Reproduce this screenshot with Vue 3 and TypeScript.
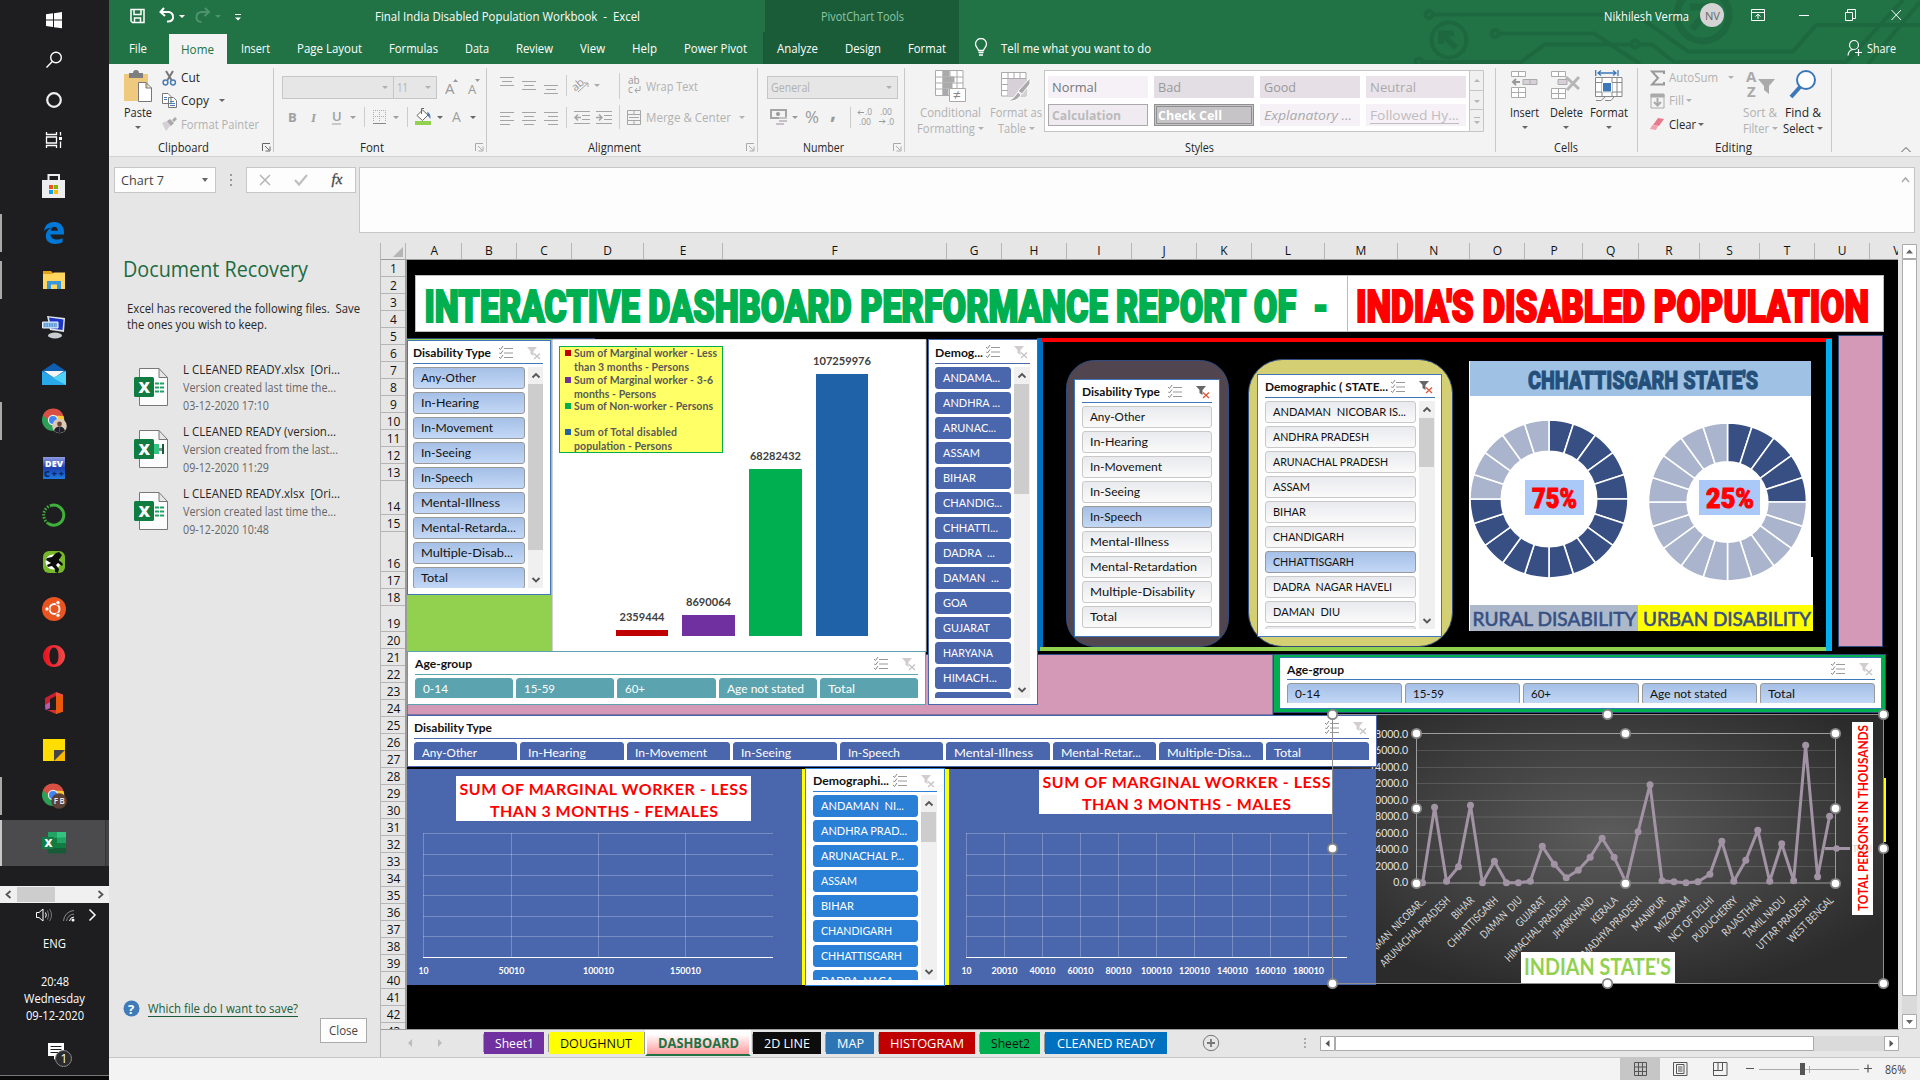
<script setup lang="ts">
import { h } from 'vue'

// A single line of text set to an exact advance width.
const Fit = (p: { t: string; w: number | string; s?: number | string }) => {
  const s = Number(p.s ?? 12)
  return h('svg', { class: 'fit', width: p.w, height: Math.round(s * 1.4) }, [
    h('text', { x: 0, y: Math.round(s * 1.07), 'font-size': s, textLength: p.w, lengthAdjust: 'spacingAndGlyphs' }, p.t),
  ])
}
Fit.props = ['t', 'w', 's']

const appTitle = 'Final India Disabled Population Workbook  -  Excel'
const recoveryNote = 'Excel has recovered the following files.  Save'
const heading = 'INTERACTIVE DASHBOARD PERFORMANCE REPORT OF  -'

const tabs: [string, number, string][] = [
  ['File', 18, 'tabFile'], ['Home', 33, 'on'], ['Insert', 29, ''], ['Page Layout', 65, ''], ['Formulas', 49, ''],
  ['Data', 24, ''], ['Review', 37, ''], ['View', 25, ''], ['Help', 25, ''], ['Power Pivot', 63, 'pp'],
  ['Analyze', 41, 'ctx'], ['Design', 36, 'ctx'], ['Format', 38, 'ctx last'],
]

const styleCells: [string, number, string][] = [
  ['Normal', 45, 'normal'], ['Bad', 23, 'bad'], ['Good', 32, 'good'], ['Neutral', 46, 'neutral'],
  ['Calculation', 69, 'calc'], ['Check Cell', 64, 'check'], ['Explanatory ...', 88, 'expl'], ['Followed Hy...', 89, 'foll'],
]

const files = [
  { n: 'L CLEANED READY.xlsx  [Ori...', nw: 157, v: 'Version created last time the...', vw: 153, d: '03-12-2020 17:10', m: false },
  { n: 'L CLEANED READY (version...', nw: 153, v: 'Version created from the last...', vw: 155, d: '09-12-2020 11:29', m: true },
  { n: 'L CLEANED READY.xlsx  [Ori...', nw: 157, v: 'Version created last time the...', vw: 153, d: '09-12-2020 10:48', m: false },
]

const colEdges = [407, 461.5, 516.5, 571.5, 643.5, 722.5, 946.5, 1001.5, 1066.5, 1131.5, 1196.5, 1251.5, 1324.5, 1397.5, 1470, 1525, 1583, 1638.5, 1699.5, 1759.5, 1814.5, 1869.5]
const cols = colEdges.map((x, i) => ({ n: String.fromCharCode(65 + i), w: (colEdges[i + 1] ?? 1924) - x }))
const tall: Record<number, number> = { 14: 34, 16: 40, 19: 26 }
const rows = Array.from({ length: 43 }, (_, i) => ({ n: i + 1, h: tall[i + 1] ?? (i === 0 ? 16.5 : 17) }))

type Item = [string, number]
interface Slicer {
  x: number; y: number; w: number; h: number; title: string; tw: number; theme: string; pad: number; padR: number
  items: Item[]; sel?: number; row?: boolean; bw?: number; bh: number; active?: boolean; top: number
  thumb?: [number, number]
}
const types: Item[] = [['Any-Other', 55], ['In-Hearing', 58], ['In-Movement', 72], ['In-Seeing', 50], ['In-Speech', 52], ['Mental-Illness', 79]]
const ages: Item[] = [['0-14', 25], ['15-59', 31], ['60+', 20], ['Age not stated', 77], ['Total', 27]]
const slicers: Slicer[] = [
  { x: 407, y: 340, w: 144, h: 255, title: 'Disability Type', tw: 78, theme: 'sky', pad: 5, padR: 7, top: 26, bw: 112, bh: 221, thumb: [17, 166],
    items: [...types, ['Mental-Retarda...', 95], ['Multiple-Disab...', 92], ['Total', 27]] },
  { x: 407, y: 651, w: 519, h: 54, title: 'Age-group', tw: 57, theme: 'teal', pad: 7, padR: 7, top: 26, row: true, bh: 20, items: ages },
  { x: 928, y: 339, w: 110, h: 366, title: 'Demog...', tw: 48, theme: 'indigo', pad: 6, padR: 7, top: 27, bw: 76, bh: 331, thumb: [17, 110],
    items: [['ANDAMA...', 57], ['ANDHRA ...', 57], ['ARUNAC...', 53], ['ASSAM', 37], ['BIHAR', 33], ['CHANDIG...', 59], ['CHHATTI...', 55], ['DADRA  ...', 52], ['DAMAN  ...', 56], ['GOA', 24], ['GUJARAT', 47], ['HARYANA', 50], ['HIMACH...', 54], ['', 10]] },
  { x: 1074, y: 379, w: 146, h: 258, title: 'Disability Type', tw: 78, theme: 'pale', pad: 7, padR: 7, top: 26, bw: 130, bh: 226, active: true, sel: 4,
    items: [...types, ['Mental-Retardation', 107], ['Multiple-Disability', 105], ['Total', 27]] },
  { x: 1257, y: 374, w: 185, h: 263, title: 'Demographic ( STATE...', tw: 123, theme: 'pale', pad: 7, padR: 6, top: 26, bw: 151, bh: 228, active: true, sel: 6, thumb: [17, 49],
    items: [['ANDAMAN  NICOBAR IS...', 133], ['ANDHRA PRADESH', 96], ['ARUNACHAL PRADESH', 115], ['ASSAM', 37], ['BIHAR', 33], ['CHANDIGARH', 71], ['CHHATTISGARH', 81], ['DADRA  NAGAR HAVELI', 119], ['DAMAN  DIU', 67], ['', 10]] },
  { x: 1279, y: 657, w: 603, h: 52, title: 'Age-group', tw: 57, theme: 'sky', pad: 7, padR: 6, top: 25, row: true, bh: 20, items: ages },
  { x: 407, y: 715, w: 970, h: 52, title: 'Disability Type', tw: 78, theme: 'indigo', pad: 6, padR: 7, top: 26, row: true, bh: 18,
    items: [...types, ['Mental-Retar...', 80], ['Multiple-Disa...', 84], ['Total', 27]] },
  { x: 805, y: 768, w: 140, h: 218, title: 'Demographi...', tw: 76, theme: 'azure', pad: 7, padR: 7, top: 26, bw: 105, bh: 185, thumb: [17, 30],
    items: [['ANDAMAN  NI...', 83], ['ANDHRA PRAD...', 86], ['ARUNACHAL P...', 83], ['ASSAM', 36], ['BIHAR', 33], ['CHANDIGARH', 71], ['CHHATTISGARH', 81], ['DADRA  NAGA...', 80]] },
]

const legend: [string, number, number, string][] = [
  ['Sum of Marginal worker - Less', 143, 356.5, '#c00000'], ['than 3 months - Persons', 115, 370.5, ''],
  ['Sum of Marginal worker - 3-6', 139, 383.5, '#7030a0'], ['months - Persons', 82, 397.5, ''],
  ['Sum of Non-worker - Persons', 139, 409.5, '#00b050'],
  ['Sum of Total disabled', 103, 435.5, '#1f62a8'], ['population - Persons', 98, 449.5, ''],
]
const bars = [
  { x: 616, y: 630, w: 52, c: '#c00000', t: '2359444', tw: 45, ty: 621 },
  { x: 682, y: 615, w: 53, c: '#7030a0', t: '8690064', tw: 45, ty: 606 },
  { x: 749, y: 469, w: 53, c: '#00b050', t: '68282432', tw: 51, ty: 460 },
  { x: 816, y: 374, w: 52, c: '#1f62a8', t: '107259976', tw: 58, ty: 365 },
]

const wedge = (cx: number, cy: number, R: number, r: number, i: number) => {
  const p = (a: number, q: number) => `${(cx + q * Math.sin(a)).toFixed(2)} ${(cy - q * Math.cos(a)).toFixed(2)}`
  const a = (i * Math.PI) / 10, b = ((i + 1) * Math.PI) / 10
  return `M${p(a, R)}A${R} ${R} 0 0 1 ${p(b, R)}L${p(b, r)}A${r} ${r} 0 0 0 ${p(a, r)}Z`
}
const donuts = [
  { cx: 1549, cy: 499, R: 79, r: 47.7, n: 15 },
  { cx: 1727.5, cy: 502, R: 79, r: 40.3, n: 5 },
]

const hLines = [833.5, 854.5, 875.5, 895.5, 916.5, 936.5]
const femaleAxis = [['10', 423.5, 10], ['50010', 511.5, 26], ['100010', 598.5, 31], ['150010', 685.5, 31]] as [string, number, number][]
const maleAxis = Array.from({ length: 10 }, (_, i) => [String(i * 20000 + 10), 966.5 + i * 38, i === 0 ? 10 : i < 5 ? 26 : 31] as [string, number, number])

const raw = [578, 352, 574, 530, 346, 578, 514, 578, 578, 574, 469, 523, 563, 541, 502, 445, 502, 578, 425, 284, 572, 575, 578, 575, 553, 454, 574, 511, 421, 574, 461, 572, 166, 560, 379]
const pts = raw.map((v, i) => ({ x: 1422.6 + i * 11.97, y: 690 + v / 3 }))
const line = pts.map(p => `${p.x.toFixed(1)},${p.y.toFixed(1)}`).join(' ')
const states: [string, number][] = [['ANDAMAN  NICOBAR...', 92], ['ARUNACHAL PRADESH', 94], ['BIHAR', 27], ['CHHATTISGARH', 67], ['DAMAN  DIU', 54], ['GUJARAT', 38], ['HIMACHAL PRADESH', 87], ['JHARKHAND', 54], ['KERALA', 33], ['MADHYA PRADESH', 80], ['MANIPUR', 43], ['MIZORAM', 45], ['NCT OF DELHI', 59], ['PUDUCHERRY', 59], ['RAJASTHAN', 51], ['TAMIL NADU', 54], ['UTTAR PRADESH', 70], ['WEST BENGAL', 60]]
const handles: [number, number][] = [[1332.5, 714.5], [1607.5, 714.5], [1883.5, 714.5], [1332.5, 848.5], [1883.5, 848.5], [1332.5, 983.5], [1607.5, 983.5], [1883.5, 983.5], [1416.5, 733.5], [1625.5, 733.5], [1835.5, 733.5], [1416.5, 808.5], [1835.5, 808.5], [1416.5, 883.5], [1625.5, 883.5], [1835.5, 883.5]]

const sheets: [string, number, number, string][] = [
  ['Sheet1', 60, 39, 'purple'], ['DOUGHNUT', 94, 72, 'yellow'], ['DASHBOARD', 106, 81, 'current'], ['2D LINE', 68, 46, 'dark'],
  ['MAP', 48, 27, 'blue'], ['HISTOGRAM', 96, 74, 'red'], ['Sheet2', 60, 39, 'green'], ['CLEANED READY', 122, 98, 'azureTab'],
]
</script>

<template>
  <div class="screen">
    <aside class="taskbar">
      <div class="tk s"><svg width="18" height="18"><path fill="#fff" d="M1 3.3 8 2.3V8.6H1zM9 2.2 17 1V8.6H9zM1 9.6H8V16L1 15zM9 9.6H17V17.3L9 16.2z" /></svg></div>
      <div class="tk s"><svg width="18" height="18" fill="none" stroke="#fff" stroke-width="1.4"><circle cx="11" cy="6.5" r="5.3" /><path d="M7.3 10.5 1.5 16.5" /></svg></div>
      <div class="tk s"><svg width="18" height="18"><circle cx="9" cy="9" r="6.8" fill="none" stroke="#eee" stroke-width="2.2" /></svg></div>
      <div class="tk s v"><svg width="18" height="18" fill="none" stroke="#fff" stroke-width="1.3"><path d="M1.5 1V3.5H11.5V1M1.5 17V14.5H11.5V17M1.5 6H11.5V12H1.5zM15.5 1V4.5M15.5 10.500V17" /><path d="M14 6h3v3h-3z" fill="#fff" stroke="none" /></svg></div>
      <div class="tk"><svg width="24" height="26"><path d="M6.500 8V2H17V8" fill="none" stroke="#eee" stroke-width="2" /><path fill="#eee" d="M0 7H23V25H0z" /><path fill="#f25022" d="M7 12h4v4H7z" /><path fill="#7fba00" d="M12 12h4v4h-4z" /><path fill="#00a4ef" d="M7 17h4v4H7z" /><path fill="#ffb900" d="M12 17h4v4h-4z" /></svg></div>
      <div class="tk run"><svg width="22" height="24"><path fill="#0078d7" d="M1 10C2 3 6.500 1 11.500 1 17.500 1 21 5.500 21 11V13.500H7.500C7.800 17 10.500 18.500 13.500 18.500 16 18.500 18 17.800 19.500 16.900V21.300C17.500 22.500 15 23 12.200 23 6.500 23 2.800 19.800 2.800 15 2.800 11 5 8.200 8.300 6.800 5.500 7 2.800 8.200 1 10zM7.700 9.700H14.800C14.800 7.200 13.500 5.800 11.500 5.800 9.500 5.800 8.200 7.200 7.700 9.700z" /></svg></div>
      <div class="tk run"><svg width="24" height="20"><path fill="#e3a21a" d="M1 1H9L11 3V6H1z" /><path fill="#ffd75e" d="M1 4H10L12 2.500H23V19H1z" /><path fill="#3a96dd" d="M5 11H19V19H15V14.500H9V19H5z" /></svg></div>
      <div class="tk"><svg width="24" height="24"><path fill="#dfe3e8" d="M5 1 23 3 22 17 8 15z" /><path fill="#1b35c4" d="M7 2.500 21.500 4.500 20.500 15 9 13.500z" /><ellipse cx="13" cy="20.500" rx="7" ry="3" fill="#c9ccd0" /><path fill="#8fc3ee" stroke="#eef" d="M.500 7H16V13H.500z" /><path stroke="#3872b8" stroke-dasharray="1.500 1" d="M2 9H15M2 11H15" /></svg></div>
      <div class="tk"><svg width="24" height="24"><path fill="#0f5fb0" d="M0 9 12 1 24 9V14H0z" /><path fill="#f4f4f4" d="M2 9H22L12 16z" /><path fill="#29a8ea" d="M0 9 12 15.500 24 9V23H0z" /><path fill="#50d1f8" d="M24 9 11 16 24 23z" /></svg></div>
      <div class="tk run"><svg width="26" height="26"><circle cx="12" cy="12" r="11" fill="#2c9f57" /><path fill="#d94f43" d="M2 7A11 11 0 0 1 22.500 8H12L9 14z" /><path fill="#fcc934" d="M22.500 8A11 11 0 0 1 13 23L17 13 12 7.500z" /><circle cx="12" cy="12" r="5.200" fill="#eee" /><circle cx="12" cy="12" r="4" fill="#4285f4" /><circle cx="18.500" cy="18" r="7.300" fill="#d8c9b8" /><path fill="#20202a" d="M13 23Q14 18.500 18.500 18.500T24 23Q18.500 27 13 23z" /><circle cx="18.500" cy="16" r="2.400" fill="#6d4535" /><path fill="#b2202c" d="M18 19h1v5h-1z" /></svg></div>
      <div class="tk"><svg width="22" height="22"><defs><linearGradient id="dv" x2="0" y2="1"><stop offset="0" stop-color="#8d9be0" /><stop offset=".5" stop-color="#1e3fae" /><stop offset="1" stop-color="#1f7be0" /></linearGradient></defs><path fill="url(#dv)" d="M0 0H22V22H0z" /><text x="2" y="10" font-size="9" font-weight="800" fill="#fff" textLength="18">DEV</text><text x="1" y="20" font-size="9" font-weight="800" fill="#0a2a66" textLength="20">C++</text></svg></div>
      <div class="tk"><svg width="24" height="24" fill="none" stroke="#3fb13a"><path stroke-width="3" d="M9 2.500A10 10 0 1 1 6 20.300" /><path stroke-width="3" stroke-dasharray="1.500 1.500" d="M6 20.300A10 10 0 0 1 9 2.500" /></svg></div>
      <div class="tk"><svg width="22" height="22"><rect width="22" height="22" rx="6" fill="#76b82a" /><circle cx="10" cy="11" r="7.500" fill="#fff" /><path fill="#0c0c0c" d="M9 6 13 2 16 1 19 4 16 9 20 13 19 15 15 12 13 14 16 18 15 22 12 21 12 18 9 15 5 16 4 14 8 12 3 9 4 7z" /></svg></div>
      <div class="tk"><svg width="24" height="24"><circle cx="12" cy="12" r="12" fill="#e95420" /><circle cx="12.500" cy="12" r="5" fill="none" stroke="#fff" stroke-width="2" /><g fill="#fff" stroke="#e95420"><circle cx="5" cy="12" r="2.200" /><circle cx="16" cy="5.700" r="2.200" /><circle cx="16" cy="18.300" r="2.200" /></g></svg></div>
      <div class="tk"><svg width="22" height="22"><defs><linearGradient id="op"><stop offset="0" stop-color="#e8101f" /><stop offset="1" stop-color="#f04a4a" /></linearGradient></defs><path fill="url(#op)" fill-rule="evenodd" d="M11 0A11 11 0 1 1 11 22 11 11 0 1 1 11 0M11 2.500C8 2.500 6.500 6.500 6.500 11S8 19.500 11 19.500 15.500 15.500 15.500 11 14 2.500 11 2.500z" /></svg></div>
      <div class="tk"><svg width="20" height="22"><path fill="#c8202f" d="M1 6 12 0V4L6 7V16L1 18z" /><path fill="#b65cb0" d="M1 13 6 10V16L2 18z" /><path fill="#f2503b" d="M12 0 19 2.500V19.500L12 22z" /><path fill="#e8590c" d="M12 4H19V19.500L12 22z" /><path fill="#d42d3a" d="M3 18H12V22z" /></svg></div>
      <div class="tk"><svg width="22" height="22"><path fill="#fd0" d="M0 0H22V22H0z" /><path fill="#fcb900" d="M11 22H22V11z" /><path fill="#454545" d="M11 11H22L11 22z" /></svg></div>
      <div class="tk run"><svg width="26" height="26"><circle cx="12" cy="12" r="11" fill="#2c9f57" /><path fill="#d94f43" d="M2 7A11 11 0 0 1 22.500 8H12L9 14z" /><path fill="#fcc934" d="M22.500 8A11 11 0 0 1 13 23L17 13 12 7.500z" /><circle cx="12" cy="12" r="5.200" fill="#eee" /><circle cx="12" cy="12" r="4" fill="#4285f4" /><circle cx="18" cy="18" r="7.800" fill="#5d4037" /><text x="12.700" y="21" font-size="8" font-weight="600" fill="#eee" textLength="11">FB</text></svg></div>
      <div class="tk run hot"><svg width="24" height="22"><path fill="#21a366" d="M6 0H15V6H6z" /><path fill="#33c481" d="M15 0H24V6H15z" /><path fill="#107c41" d="M6 6H15V16H6zM15 11h9v5h-9z" /><path fill="#21a366" d="M15 5.500H24V11H15z" /><path fill="#185c37" d="M6 16H24V21.500H6z" /><rect y="5" width="12" height="12" rx="1" fill="#107c41" /><text x="2.500" y="15" font-size="11" font-weight="800" fill="#fff">X</text></svg></div>
      <div class="tkscroll"><svg width="109" height="17"><path fill="#cdcdcd" d="M17 1H55V16H17z" /><path d="M10.500 5 6.500 8.500 10.500 12M98.500 5 102.500 8.500 98.500 12" fill="none" stroke="#555" stroke-width="1.800" /></svg></div>
      <div class="tray"><svg width="70" height="16" fill="none" stroke="#fff"><path d="M1.500 5.500H4L8 2V14L4 10.500H1.500z" /><path d="M10.500 5.500Q12 8 10.500 10.500" /><path stroke="#777" d="M12.500 3.500Q15 8 12.500 12.500M14.500 2Q18.500 8 14.500 14" /><path stroke="#888" d="M28.500 14A11 11 0 0 1 39 3.500M31.500 14A8 8 0 0 1 39 7" /><path d="M34.500 14A5 5 0 0 1 39 10" /><circle cx="38" cy="13" r="1.500" fill="#fff" stroke="none" /><path stroke-width="1.500" d="M54.500 2.500 60 8 54.500 13.500" /></svg></div>
      <Fit class="eng" t="ENG" w="23" />
      <Fit class="clk" t="20:48" w="28" />
      <Fit t="Wednesday" w="61" />
      <Fit t="09-12-2020" w="58" />
      <svg class="note" width="28" height="26"><path fill="#fff" d="M2 1H18V14H11L8 18V14H2z" /><path stroke="#1e1e20" d="M4.500 4.500H15.500M4.500 7.500H15.500M4.500 10.500H12" /><circle cx="17.500" cy="16.500" r="8" fill="#2b2b2d" stroke="#888" /><text x="14.500" y="21" font-size="12" fill="#fff">1</text></svg>
      <div class="peek" />
    </aside>

    <main class="excel">
      <header class="top">
        <svg class="circuit" width="510" height="64" viewBox="1410 0 510 64" fill="none" stroke="#1e6840" stroke-width="4"><circle cx="1429" cy="14.500" r="3.500" /><path d="M1433 14.500H1636L1688 51.500H1793L1816 25H1920M1498 33.500H1594L1640 64M1423 62H1521L1545 44.500H1631M1640 44.500H1652L1674 62H1846L1903 0M1868 64 1920 2" /><circle cx="1495" cy="33.500" r="3.500" /><circle cx="1635" cy="44" r="3.500" /><circle cx="1419" cy="62" r="3.500" /><circle cx="1449" cy="40" r="17.500" /><path stroke-width="6" d="M1456 48 1443 35M1441 44V33.500H1454" /><circle cx="1703" cy="15" r="26" stroke-width="7" /><path stroke-width="7" d="M1692 29 1707 12M1690 7H1706V23" /></svg>
        <div class="titlebar">
          <svg class="qat" width="120" height="24" fill="none" stroke="#fff"><path stroke-width="1.500" d="M2 5.500H15V18.500H3.500L2 17zM5 6V10.500H12V6M5.500 18V14H11.500V18" /><path stroke-width="2" d="M35 4 31.500 8 36 12M32 8H40Q44.500 9 44 14 43 18 38 17.500" /><path fill="#fff" stroke="none" d="M50 11h6l-3 3zM106 13.500h6l-3 3z" /><path stroke="#4f936d" stroke-width="2" d="M76 4 80 8 75.500 12M79.500 8H72Q67 9 67.500 14 68 18 72.500 18" /><path fill="#4f936d" stroke="none" d="M86 11h6l-3 3z" /><path d="M106 10.500H112" /></svg>
          <Fit class="wb" :t="appTitle" w="265" />
          <div class="ctxhead"><Fit t="PivotChart Tools" w="83" /></div>
          <Fit class="user" t="Nikhilesh Verma" w="85" />
          <div class="avatar"><Fit t="NV" w="15" s="11" /></div>
          <svg class="win" width="160" height="20" fill="none" stroke="#fff"><path d="M2.500 4.500H15.500V15.500H2.500zM2.500 7.500H15.500M9 14V9.500M6.500 11.500 9 9.200 11.500 11.500M50 10.500H60M96.500 7.500H103.500V15.500H96.500zM98.500 7V4.500H106.500V13.500H104M142.500 5 152 15M152 5 142.500 15" /></svg>
        </div>
        <nav class="tabs">
          <div v-for="t in tabs" :key="t[0]" class="tab" :class="t[2]"><Fit :t="t[0]" :w="t[1]" /></div>
          <svg class="bulb" width="14" height="20" fill="none" stroke="#fff" stroke-width="1.300"><path d="M4.500 12.500C4 10 1.500 9 1.500 6A5.500 5.500 0 0 1 12.500 6C12.500 9 10 10 9.500 12.500zM4.500 14.500H9.500M5 17H9" /></svg>
          <Fit t="Tell me what you want to do" w="150" />
          <svg class="shareic" width="16" height="18" fill="none" stroke="#fff" stroke-width="1.200"><circle cx="7" cy="6" r="4.500" /><path d="M1 16.500Q1.500 11 6 10.500M8 13.500H15M11.500 10V17" /></svg>
          <Fit t="Share" w="29" />
        </nav>
      </header>

      <section class="ribbon">
        <div class="group g1">
          <div class="gc">
            <div class="big paste"><svg width="28" height="32"><path fill="#eec97e" d="M0 4H24V31H0z" /><path fill="#7f7f7f" d="M5 3H9Q9 0 12 0T15 3H19V8H5z" /><path fill="#fff" stroke="#777" d="M14.500 12.500H22L27.500 18V31.500H14.500zM22 12.500V18H27.500" /></svg><Fit t="Paste" w="28" /><i class="dn" /></div>
            <div class="stack">
              <div><svg width="15" height="16" fill="none"><path stroke="#777" stroke-width="2" d="M4 1 9.500 10M11 1 5.500 10" /><g stroke="#4a7db5" stroke-width="1.500"><circle cx="3.500" cy="12.500" r="2.400" /><circle cx="11" cy="12.500" r="2.400" /></g></svg><Fit t="Cut" w="19" /></div>
              <div><svg width="15" height="15"><path fill="#fff" stroke="#777" d="M.500.500H6L9 3.500V10.500H.500zM6.500 4.500H11.500L14.500 7.500V14.500H6.500z" /><path stroke="#4a7db5" d="M2 4.500H5M2 6.500H5M8 8.500H12M8 10.500H13M8 12.500H13" /></svg><Fit t="Copy" w="28" /><i class="dn" /></div>
              <div class="off"><svg width="15" height="15"><path fill="#d5cfd8" d="M0 6 5 4 9 8 4 14z" /><path fill="#aaa" d="M5 4 8 2 12 6 9 9zM10 3 13 0 15 2 12 5z" /></svg><Fit t="Format Painter" w="78" /></div>
            </div>
          </div>
          <div class="gl"><span><Fit t="Clipboard" w="51" /></span><svg class="la" width="9" height="9"><path d="M.500 8V.500H8M3 3 7 7M8 3.500V8H3.500" fill="none" stroke="#666" /></svg></div>
        </div>
        <div class="group g2">
          <div class="gc col off">
            <div class="r1"><div class="combo f1"><i class="dn" /></div><div class="combo f2"><Fit t="11" w="11" /><i class="dn" /></div><svg class="m8" width="36" height="20" fill="#999"><text x="0" y="17" font-size="15">A</text><path d="M8 5h5l-2.500-3z" /><text x="23" y="17" font-size="13">A</text><path d="M30 2h5l-2.500 3z" /></svg></div>
            <div class="r2"><svg width="182" height="22" fill="#a0a0a0"><text x="0" y="15.500" font-size="13" font-weight="700">B</text><text x="23" y="15.500" font-size="13" font-style="italic" font-family="Liberation Serif" font-weight="700">I</text><text x="44" y="15" font-size="13" font-weight="600">U</text><path d="M44 17.500h9v1h-9zM62 10h6l-3 3zM105 10h6l-3 3z" /><path fill="none" stroke="#ccc" d="M76.500 1V21M119.500 1V21" /><path fill="none" stroke="#b5a9b5" stroke-dasharray="1 1" d="M85 4.500H98M85 10.500H98M85.500 4V16M91.500 4V16M97.500 4V16" /><path stroke="#888" d="M85 17.500H98" /><path fill="#fff" stroke="#666" d="M129 9.500 134.500 4 140 9 134.500 14.500zM133.500 8V2.500H136" /><path fill="#4a7db5" d="M139 6Q143 7 142.500 13L140 10z" /><path fill="#92d050" d="M127 15h16v4h-16z" /><path fill="#666" d="M149 10h6l-3 3z" /><text x="164" y="15.500" font-size="14">A</text></svg><i class="dn k" /></div>
          </div>
          <div class="gl"><span><Fit t="Font" w="24" /></span><svg class="la off" width="9" height="9"><path d="M.500 8V.500H8M3 3 7 7M8 3.500V8H3.500" fill="none" stroke="#aaa" /></svg></div>
        </div>
        <div class="group g3">
          <div class="gc col off al">
            <div class="r1"><svg width="146" height="26" fill="none" stroke="#a5a5a5"><path d="M0 4.500H14M2 8.500H12M0 12.500H14M22 8.500H36M24 12.500H34M22 16.500H36M44 12.500H58M46 16.500H56M44 20.500H58" /><path stroke="#ccc" d="M66.500 2V23M119.500 0V26" /><text x="72" y="14" font-size="11" fill="#999" stroke="none" transform="rotate(-40 80 12)">ab</text><path d="M78 19 88 10M84 10H88V14" /><path fill="#aaa" stroke="none" d="M94 11h6l-3 3z" /><text x="128" y="11" font-size="10" fill="#999" stroke="none">ab</text><text x="128" y="20" font-size="10" fill="#999" stroke="none">c</text><path d="M135 17.500H140V13M137 15 135 17.500 137 20" /></svg><Fit t="Wrap Text" w="52" /></div>
            <div class="r2"><svg width="146" height="24" fill="none" stroke="#a5a5a5"><path d="M0 7.500H14M0 11.500H10M0 15.500H14M0 19.500H10M22 7.500H36M24 11.500H34M22 15.500H36M24 19.500H34M44 7.500H58M48 11.500H58M44 15.500H58M48 19.500H58M74 6.500H90M82 10.500H90M82 14.500H90M74 18.500H90M96 6.500H112M104 10.500H112M104 14.500H112M96 18.500H112" /><path stroke-width="1.500" d="M81 12.500H75M78 9.500 75 12.500 78 15.500M96 12.500H102M99 9.500 102 12.500 99 15.500" /><path stroke="#ccc" d="M66.500 2V23M119.500 0V24" /><path d="M127.500 5.500H140.500V19.500H127.500zM127.500 9.500H140.500M127.500 15.500H140.500M134 5.500V9M134 16V19M129 12.500H139" /></svg><Fit t="Merge &amp; Center" w="85" /><i class="dn m8" /></div>
          </div>
          <div class="gl"><span><Fit t="Alignment" w="53" /></span><svg class="la" width="9" height="9"><path d="M.500 8V.500H8M3 3 7 7M8 3.500V8H3.500" fill="none" stroke="#aaa" /></svg></div>
        </div>
        <div class="group g4">
          <div class="gc col off">
            <div class="r1"><div class="combo f3"><Fit t="General" w="39" /><i class="dn" /></div></div>
            <div class="r2"><svg width="128" height="24" fill="#999"><path fill="none" stroke="#a5a5a5" stroke-width="2" d="M1 5H16V13H1z" /><circle cx="8" cy="9" r="2" /><path fill="#c8c0c8" d="M9 12h8v2H9zM9 15h8v2H9zM6 18h8v2H6z" /><path d="M22 11h6l-3 3z" /><text x="35" y="18" font-size="16" textLength="14" lengthAdjust="spacingAndGlyphs">%</text><text x="60" y="14" font-size="22" font-weight="700">,</text><path fill="#ccc" d="M80 2h1v21h-1z" /><text x="95" y="10" font-size="8.500">.0</text><text x="89" y="19.500" font-size="8.500">.00</text><text x="110" y="10" font-size="8.500">.00</text><text x="117" y="19.500" font-size="8.500">.0</text><path fill="none" stroke="#999" d="M94 7.500H88M90 5.500 88 7.500 90 9.500M109 16.500H115M113 14.500 115 16.500 113 18.500" /></svg></div>
          </div>
          <div class="gl"><span><Fit t="Number" w="41" /></span><svg class="la" width="9" height="9"><path d="M.500 8V.500H8M3 3 7 7M8 3.500V8H3.500" fill="none" stroke="#aaa" /></svg></div>
        </div>
        <div class="group g5">
          <div class="gc off">
            <div class="big cf"><svg width="31" height="32" fill="#fff" stroke="#aaa"><path d="M.500.500H28V25.500H.500zM.500 7H28M.500 13H28M.500 19H28M8 0V25M15 0V25M22 0V25" /><path fill="#aaa" d="M8 0h6v6H8zM8 7h11v5H8zM8 13h9v5H8zM8 19h5v6H8z" /><path d="M14.500 18.500H30.500V31.500H14.500z" /><text x="18" y="30" font-size="14" fill="#888" stroke="none">≠</text></svg><Fit t="Conditional" w="61" /><div class="ln"><Fit t="Formatting" w="58" /><i class="dn" /></div></div>
            <div class="big ft"><svg width="30" height="32" fill="#fff" stroke="#aaa"><path d="M.500 2.500H25V26H.500zM.500 8.500H25M.500 14.500H25M.500 20.500H25M7 2V26M13 2V26M19 2V26" /><path fill="#d8d0d8" stroke="none" d="M7 9h18v17H7z" /><path fill="#aaa" stroke="#fff" d="M29 8V14L21 24 17 21zM17 22 20 25Q16 32 7 31 13 29 17 22z" /></svg><Fit t="Format as" w="52" /><div class="ln"><Fit t="Table" w="28" /><i class="dn" /></div></div>
            <div class="gallery">
              <div class="cells"><div v-for="c in styleCells" :key="c[0]" class="sc" :class="c[2]"><Fit :t="c[0]" :w="c[1]" s="13" /></div></div>
              <svg class="gs" width="15" height="62"><path fill="#f0f0f0" stroke="#c6c6c6" d="M.500.500H14.500V61.500H.500zM0 20.500H15M0 39.500H15" /><path fill="#b5b5b5" d="M5 12h6l-3-3zM5 30h6l-3 3zM5 51h6l-3 3zM5 47h6v1H5z" /></svg>
            </div>
          </div>
          <div class="gl"><span><Fit t="Styles" w="29" /></span></div>
        </div>
        <div class="group g6">
          <div class="gc">
            <div class="big ci"><svg width="27" height="30" fill="#fff" stroke="#aaa"><path d="M.500 1.500H14.500V6.500H.500zM7.500 1V7M.500 17.500H14.500V27.500H.500zM7.500 17V28M0 22.500H15" /><path fill="#d8d0d8" d="M12 9.500H26V14.500H12zM19 9V15" /><path stroke="#999" stroke-width="2" d="M9 12H2M5 9 2 12 5 15" fill="none" /></svg><Fit t="Insert" w="29" /><i class="dn" /></div>
            <div class="big cd"><svg width="30" height="30" fill="#fff" stroke="#aaa"><path d="M.500 1.500H14.500V6.500H.500zM7.500 1V7M.500 18.500H14.500V28.500H.500zM7.500 18V28M0 23.500H15" /><path fill="#d8d0d8" d="M7 9.500H16V14.500H7z" /><path stroke="#b5b5b5" stroke-width="3" d="M15 7 28 19M28 7 16 20" /></svg><Fit t="Delete" w="33" /><i class="dn" /></div>
            <div class="big cm"><svg width="28" height="32" fill="#fff" stroke="#888"><path stroke="#3b78b8" stroke-width="1.300" d="M.700 0V6M23 0V6M3 3H21M6 .500 3 3 6 5.500M18 .500 21 3 18 5.500" /><path d="M.500 7.500H27V26.500H.500zM.500 12.500H27M.500 22H27M7 7V27M17 7V27M22 7V27" /><path fill="#3b78b8" stroke="#fff" d="M7.500 12.500H16.500V22H7.500z" /><path d="M1 30.500H6L10 27M10 30.500H16L19 27" /></svg><Fit t="Format" w="38" /><i class="dn" /></div>
          </div>
          <div class="gl"><span><Fit t="Cells" w="24" /></span></div>
        </div>
        <div class="group g7">
          <div class="gc">
            <div class="stack ed">
              <div class="off"><svg width="15" height="16"><path fill="none" stroke="#999" stroke-width="2" d="M14 4V1.500H2L8 8 2 14.500H14V12" /></svg><Fit t="AutoSum" w="49" /><i class="dn" /></div>
              <div class="off"><svg width="15" height="16" fill="none" stroke="#aaa"><path d="M1 1.500H14V15H1z" /><path fill="#aaa" d="M1 1H14V4H1z" /><path stroke-width="2" d="M7.500 5V12M4 9 7.500 12.500 11 9" /></svg><Fit t="Fill" w="15" /><i class="dn m1" /></div>
              <div><svg width="15" height="14"><path fill="#e8788c" d="M8 1 14 2 9 9 3 8z" /><path fill="#f2a0ae" d="M2.500 8 8 9 6 13 0 12z" /></svg><Fit t="Clear" w="27" /><i class="dn m1" /></div>
            </div>
            <div class="big so off"><svg width="29" height="30" fill="#aaa"><text x="0" y="12" font-size="15" font-weight="700">A</text><text x="1" y="27" font-size="15" font-weight="700">Z</text><path d="M12 9H29L23 16V24L18 20V16z" /></svg><Fit t="Sort &amp;" w="34" /><div class="ln"><Fit t="Filter" w="26" /><i class="dn" /></div></div>
            <div class="big fi"><svg width="28" height="30"><circle cx="17" cy="10" r="9" fill="#fff" stroke="#3b78b8" stroke-width="2" /><path stroke="#3b78b8" stroke-width="4" d="M11 17 2 27" /></svg><Fit t="Find &amp;" w="36" /><div class="ln"><Fit t="Select" w="31" /><i class="dn" /></div></div>
          </div>
          <div class="gl"><span><Fit t="Editing" w="37" /></span></div>
        </div>
        <svg class="collapse" width="10" height="7"><path d="M.500 6 5 1.500 9.500 6" fill="none" stroke="#555" /></svg>
      </section>

      <section class="fbar">
        <div class="name"><Fit t="Chart 7" w="43" s="13" /><i class="dn" /></div>
        <svg class="dots" width="4" height="14"><path fill="#999" d="M1 1h2v2H1zM1 6h2v2H1zM1 11h2v2H1z" /></svg>
        <div class="fx"><svg width="90" height="20" fill="none"><path stroke="#b5b5b5" stroke-width="1.500" d="M1 5 11 15M11 5 1 15" /><path stroke="#c0c0c0" stroke-width="2.200" d="M36 10 40 14.500 48 5" /><text x="72.500" y="14" font-size="15" font-style="italic" font-family="Liberation Serif" fill="#444" stroke="#444" stroke-width=".3" textLength="11">fx</text></svg></div>
        <div class="formula"><svg width="9" height="7"><path d="M1 6 4.500 2 8 6" fill="none" stroke="#aaa" stroke-width="1.500" /></svg></div>
      </section>

      <div class="work">
        <section class="recovery">
          <Fit class="h" t="Document Recovery" w="185" s="21.500" />
          <Fit class="p1" :t="recoveryNote" w="233" />
          <Fit class="p2" t="the ones you wish to keep." w="140" />
          <div class="files">
            <div v-for="f in files" :key="f.d" class="file">
              <svg width="35" height="39"><path fill="#fcfcfc" stroke="#777" d="M5.500.500H25L33.500 9.500V37.500H5.500zM25 .500V9.500H33.500" /><g v-if="f.m"><path fill="#33c481" d="M20 14h5v10h-5z" /><path fill="#888" d="M25 18h3v3h-3z" /><path fill="#185c37" d="M28 14h2v10h-2z" /></g><path v-else d="M21 15.500H25M26 15.500H30M21 19.500H25M26 19.500H30M21 23.500H25M26 23.500H30" stroke="#21a366" stroke-width="1.800" /><rect y="9" width="20" height="20" rx="1.500" fill="#107c41" /><text x="4.500" y="25" font-size="16" font-weight="800" fill="#fff">X</text></svg>
              <div><Fit class="n" :t="f.n" :w="f.nw" /><Fit :t="f.v" :w="f.vw" /><Fit :t="f.d" w="86" /></div>
            </div>
          </div>
          <div class="help"><svg width="17" height="17"><circle cx="8.500" cy="8.500" r="8" fill="#3f7bb8" /><text x="5" y="13.500" font-size="13" font-weight="700" fill="#fff">?</text></svg><div class="lk"><Fit t="Which file do I want to save?" w="150" /></div></div>
          <div class="close"><Fit t="Close" w="29" /></div>
        </section>

        <section class="sheet">
          <div class="sheetTop">
            <div class="gridcol">
              <div class="cols"><div class="corner"><svg width="10" height="10"><path fill="#b5b5b5" d="M10 0V10H0z" /></svg></div><div class="colrow"><div v-for="c in cols" :key="c.n" class="ch" :style="{ width: c.w + 'px' }">{{ c.n }}</div></div></div>
              <div class="body">
                <div class="rows"><div v-for="r in rows" :key="r.n" class="rh" :style="{ height: r.h + 'px' }">{{ r.n }}</div></div>
                <div class="canvas">
                  <svg class="layer" width="1491" height="769" viewBox="407 260 1491 769">
                    <defs>
                      <radialGradient id="dk" cx=".5" cy=".45" r=".6"><stop offset="0" stop-color="#5c5c5c" /><stop offset="1" stop-color="#2b2b2b" /></radialGradient>
                    </defs>
                    <rect x="415.500" y="275.500" width="1468" height="56" fill="#fff" stroke="#bdbdbd" />
                    <path stroke="#bdbdbd" d="M1347.500 276V331" />
                    <g class="impact big1" font-size="44.500">
                      <text x="424.500" y="321.500" textLength="904" lengthAdjust="spacingAndGlyphs" fill="#00b050" stroke="#00b050">{{ heading }}</text>
                      <text x="1356" y="321.500" textLength="513" lengthAdjust="spacingAndGlyphs" fill="#f00" stroke="#f00">INDIA'S DISABLED POPULATION</text>
                    </g>
                    <path fill="#2f4b80" d="M407 338h188v1H407z" />
                    <path fill="#92d050" d="M407 339h145v312H407z" />
                    <path fill="#fff" stroke="#d0d0d0" d="M552.500 339.500H926V652H552.500z" />
                    <rect x="559.500" y="346.500" width="163" height="106" fill="#ff6" stroke="#00b050" />
                    <g class="chart" font-size="10.500" font-weight="700" fill="#595959">
                      <template v-for="l in legend" :key="l[0]"><rect v-if="l[3]" x="565" :y="l[2] - 6.500" width="6" height="6" :fill="l[3]" /><text x="574" :y="l[2]" :textLength="l[1]">{{ l[0] }}</text></template>
                    </g>
                    <g class="chart" font-size="12" font-weight="700" fill="#404040">
                      <template v-for="b in bars" :key="b.t"><rect :x="b.x" :y="b.y" :width="b.w" :height="636 - b.y" :fill="b.c" /><text :x="b.x + b.w / 2 - b.tw / 2" :y="b.ty" :textLength="b.tw" lengthAdjust="spacingAndGlyphs">{{ b.t }}</text></template>
                    </g>
                    <path fill="#d599b8" stroke="#2f4b80" d="M407 654.500H1273V715H407z" />
                    <path fill="#0070c0" d="M1037 338h6v313h-6z" /><path fill="red" d="M1042 338h790v4h-790z" /><path fill="#92d050" d="M1040 647h786v4h-786z" /><path fill="#00b0f0" d="M1826 339h6v312h-6z" />
                    <rect x="1066.500" y="360.500" width="162" height="286" rx="28" fill="#514650" stroke="#2f4b80" />
                    <rect x="1248.500" y="359.500" width="204" height="287" rx="34" fill="#d4cf72" stroke="#2f4b80" />
                    <path fill="#fff" d="M1469 361H1811V557H1813V631H1469z" /><path fill="#9fc2e4" d="M1470 361h341v35h-341z" />
                    <g class="impact">
                      <text x="1528" y="388.500" font-size="26.500" textLength="230" lengthAdjust="spacingAndGlyphs" fill="#234f7a" stroke="#234f7a">CHHATTISGARH STATE'S</text>
                    </g>
                    <g v-for="d in donuts" :key="d.cx" stroke="#fff" stroke-width="1.600"><path v-for="i in 20" :key="i" :d="wedge(d.cx, d.cy, d.R, d.r, i - 1)" :fill="i <= d.n ? '#374f83' : '#aab4cd'" /></g>
                    <path fill="#aac8f8" d="M1525 480h59v35h-59zM1699 480h61v35h-61z" />
                    <g class="impact" font-size="28.500" fill="#f00" stroke="#f00">
                      <text x="1532" y="507.500" textLength="45" lengthAdjust="spacingAndGlyphs">75%</text><text x="1706" y="507.500" textLength="48" lengthAdjust="spacingAndGlyphs">25%</text>
                    </g>
                    <path fill="#adb9ca" d="M1470 605h168v26h-168z" /><path fill="#ff0" d="M1638 605h175v26h-175z" />
                    <g class="deco" font-size="19.500" fill="#374f83" stroke="#374f83" stroke-width=".6"><text x="1472.500" y="626" textLength="164" lengthAdjust="spacingAndGlyphs">RURAL DISABILITY</text><text x="1643" y="626" textLength="168" lengthAdjust="spacingAndGlyphs">URBAN DISABILITY</text></g>
                    <rect x="1838.500" y="335.500" width="44" height="311" fill="#d599b8" stroke="#2f4b80" />
                    <rect x="1273.500" y="654.500" width="612" height="58" fill="#00b050" stroke="#2f4b80" />

                    <rect x="1332" y="714" width="552" height="269" fill="url(#dk)" />
                    <path stroke="#fff" stroke-opacity=".14" d="M1416 750.500H1836M1416 767.500H1836M1416 783.500H1836M1416 800.500H1836M1416 817H1836M1416 833.500H1836M1416 850H1836M1416 866.500H1836" />
                    <g class="chart" font-size="10.500" fill="#e2e2e2" text-anchor="end"><text v-for="i in 10" :key="i" x="1408" :y="737.500 + (i - 1) * 16.550">{{ ((10 - i) * 2000).toFixed(1) }}</text></g>
                    <g class="chart" font-size="11" fill="#d8d8d8"><text v-for="(s, i) in states" :key="s[0]" :transform="`translate(${1427 + i * 23.950} 901) rotate(-45)`" :x="-s[1]" y="0" :textLength="s[1]" lengthAdjust="spacingAndGlyphs">{{ s[0] }}</text></g>
                    <path fill="none" stroke="#9c9c9c" d="M1416.500 733.500H1835.500V883H1416.500z" />
                    <path fill="#fff" d="M1521 952h154v31h-154zM1852 722h21v193h-21z" />
                    <text class="chart" x="1524" y="975" font-size="22" font-weight="700" fill="#92d050" textLength="147" lengthAdjust="spacingAndGlyphs">INDIAN STATE'S</text>
                    <text class="chart" x="1852" y="852" font-size="10" fill="#d8d8d8" textLength="20">Total</text>
                    <text class="chart" transform="translate(1867.500 911) rotate(-90)" font-size="13" font-weight="700" fill="red" textLength="186" lengthAdjust="spacingAndGlyphs">TOTAL PERSON'S IN THOUSANDS</text>
                    <polyline :points="line" fill="none" stroke="#a193a4" stroke-width="3" stroke-linejoin="round" />
                    <circle v-for="(p, i) in pts" :key="i" :cx="p.x" :cy="p.y" r="3.500" fill="#a193a4" />
                    <path stroke="#a193a4" stroke-width="3" d="M1825 848.500H1850" /><circle cx="1836.500" cy="848.500" r="3.200" fill="#a193a4" />
                    <path fill="#ff0" d="M1884 778h2v64h-2z" />

                    <path fill="#4a66ac" d="M407 769h395v216H407zM949 769h427v216H949z" />
                    <path fill="#ff0" d="M802 769h3v216h-3zM945 769h4v216h-4z" />
                    <path fill="#fff" d="M456 776h295v45H456zM1039 770h293v44h-293z" />
                    <g class="chart" font-size="16" font-weight="700" fill="red">
                      <text x="459.500" y="794.500" textLength="288">SUM OF MARGINAL WORKER - LESS</text><text x="490" y="816.500" textLength="228">THAN 3 MONTHS - FEMALES</text>
                      <text x="1042.500" y="787.500" textLength="288">SUM OF MARGINAL WORKER - LESS</text><text x="1082" y="809.500" textLength="209">THAN 3 MONTHS - MALES</text>
                    </g>
                    <g stroke="#fff" stroke-opacity=".25"><path v-for="y in hLines" :key="y" :d="`M423 ${y}H773M966 ${y}H1347`" /><path v-for="a in femaleAxis" :key="a[1]" :d="`M${a[1]} 833V957`" /><path v-for="a in maleAxis" :key="a[1]" :d="`M${a[1]} 833V957`" /></g>
                    <path stroke="#fff" d="M423 957.500H773M966 957.500H1347" />
                    <g class="chart" font-size="9" font-weight="700" fill="#fff"><text v-for="a in [...femaleAxis, ...maleAxis]" :key="a[1]" :x="a[1] - a[2] / 2" y="974" :textLength="a[2]" lengthAdjust="spacingAndGlyphs">{{ a[0] }}</text></g>
                  </svg>

                  <div v-for="(s, i) in slicers" :key="i" class="slicer" :class="[s.theme, { row: s.row }]" :style="{ left: s.x - 407 + 'px', top: s.y - 260 + 'px', width: s.w + 'px', height: s.h + 'px', paddingLeft: s.pad + 'px', paddingRight: s.padR + 'px' }">
                    <div class="sh" :style="{ height: s.top - 3 + 'px' }">
                      <Fit :t="s.title" :w="s.tw" />
                      <svg class="sic" width="42" height="14" fill="none" stroke="#999"><path stroke-width="1.200" d="M5 2.500H14M5 7H14M5 11.500H14" /><path d="M0 2 1.500 3.500 4 0M0 6.500 1.500 8 4 4.500M0 11 1.500 12.500 4 9" stroke="#888" /><path :fill="s.active ? '#666' : '#d0ccd0'" stroke="none" d="M28 1H38L34.500 5V10L31.500 8V5z" /><path :stroke="s.active ? '#e05a3c' : '#c8c4c8'" stroke-width="1.400" d="M35 7.500 41 13M41 7.500 35 13" /></svg>
                    </div>
                    <div class="sb" :style="{ height: s.bh + 'px' }">
                      <div class="list" :style="s.bw ? { width: s.bw + 'px' } : {}">
                        <div v-for="(it, k) in s.items" :key="k" class="btn" :class="{ sel: s.sel === k }"><Fit v-if="it[0]" :t="it[0]" :w="it[1]" /></div>
                      </div>
                      <div v-if="s.thumb" class="vs"><svg width="16" height="17"><path d="M4.500 10.500 8 7 11.500 10.500" fill="none" stroke="#555" stroke-width="1.800" /></svg><div class="th" :style="{ height: s.thumb[1] + 'px' }" /><svg class="dnv" width="16" height="17"><path d="M4.500 7 8 10.500 11.500 7" fill="none" stroke="#555" stroke-width="1.800" /></svg></div>
                    </div>
                  </div>

                  <svg class="layer" width="1491" height="769" viewBox="407 260 1491 769"><path fill="none" stroke="#8f8f8f" d="M1332.500 714.500H1883.500V983.500H1332.500z" /><circle v-for="(p, i) in handles" :key="i" :cx="p[0]" :cy="p[1]" r="4.700" fill="#fff" stroke="#858585" stroke-width="1.800" /></svg>
                </div>
              </div>
            </div>
            <div class="vscroll"><svg width="16" height="785"><path fill="#dadada" d="M1 0h15v785H1z" /><path fill="#fff" stroke="#ababab" d="M1.500.500H15.500V14.500H1.500zM1.500 15.500H15.500V751.500H1.500zM1.500 770.500H15.500V784.500H1.500z" /><path fill="#666" d="M5 9.500h7l-3.500-4zM5 776h7l-3.500 4z" /></svg></div>
          </div>
          <div class="stabs">
            <svg class="nav" width="40" height="10"><path fill="#bbb" d="M5 1V9L1 5zM31 1V9L35 5z" /></svg>
            <div class="st" v-for="s in sheets" :key="s[0]" :class="s[3]" :style="{ width: s[1] + 'px' }"><Fit :t="s[0]" :w="s[2]" s="13.500" /></div>
            <svg class="plus" width="18" height="18" fill="none" stroke="#777"><circle cx="9" cy="9" r="7.700" /><path stroke-width="1.800" d="M9 5V13M5 9H13" /></svg>
            <svg class="sdots" width="4" height="12"><path fill="#aaa" d="M1 1h2v2H1zM1 5h2v2H1zM1 9h2v2H1z" /></svg>
            <svg class="hs" width="579" height="15"><path fill="#dadada" d="M0 0h579v15H0z" /><path fill="#fff" stroke="#ababab" d="M.500.500H14.500V14.500H.500zM15.500.500H493.500V14.500H15.500zM564.500.500H578.500V14.500H564.500z" /><path fill="#555" d="M9.500 4V11L5.500 7.500zM569.500 4V11L573.500 7.500z" /></svg>
          </div>
        </section>
      </div>

      <footer class="status">
        <div class="vw"><svg width="15" height="14" fill="none" stroke="#555"><path d="M1.500.500H13.500V13.500H1.500zM1.500 5H13.500M1.500 9.500H13.500M5.500 0V14M9.500 0V14" /></svg></div>
        <svg class="v2" width="15" height="14" fill="none" stroke="#555"><path d="M.500.500H14V13.500H.500zM3.500 2.500H11V11.500H3.500zM5 5H9.500M5 7H9.500M5 9H9.500" /></svg>
        <svg class="v3" width="15" height="14" fill="none" stroke="#555"><path d="M.500.500H14V13.500H.500zM.500 8.500H9.500V.500M5 .500V8.500" /></svg>
        <svg class="zm" width="130" height="16" fill="none" stroke="#555"><path stroke-width="1.200" d="M1 7.500H9M119 7.500H127M123 3.500V11.500" /><path stroke="#aaa" d="M14 8.500H114M64.500 5V12" /><path fill="#555" stroke="none" d="M55 2h5v12h-5z" /></svg>
        <Fit t="86%" w="21" />
      </footer>
    </main>
  </div>
</template>

<style>
body { background: #e6e6e6; overflow: hidden; }
.fit { display: block; flex: none; overflow: visible; fill: currentColor; }
.fit text, svg text { white-space: pre; }
</style>

<style scoped>
.screen { display: flex; width: 1920px; height: 1080px; overflow: hidden; font-family: "Open Sans", "Noto Sans", sans-serif; font-size: 12px; color: #262626; }
svg { flex: none; display: block; }

.taskbar { width: 109px; background: #1e1e20; color: #fff; display: flex; flex-direction: column; align-items: center; flex: none; }
.tk { width: 109px; height: 46.93px; flex: none; display: flex; align-items: center; justify-content: center; box-sizing: border-box; padding-right: 1px; }
.tk.s { height: 40px; }
.tk.s.v { height: 43px; padding-bottom: 4px; }
.tk.run { background: linear-gradient(#a9a9a6, #a9a9a6) 0 4px / 2px 38px no-repeat; }
.tk.hot { background: linear-gradient(#c8c8c4, #c8c8c4) 0 0 / 2px 46px no-repeat, linear-gradient(90deg, #4b4b4d 105px, #333 105px, #333 106px, #434345 106px) 0 0 / 109px 46px no-repeat; }
.tkscroll { margin-top: 19px; width: 109px; height: 17px; background: #f0f0f0; flex: none; }
.tray { margin-top: 4px; margin-left: 31px; }
.eng { margin-top: 12px; }
.clk { margin-top: 21px; }
.note { margin-top: 18px; margin-left: 10px; }
.peek { margin-top: auto; width: 109px; height: 4px; background: #0a0a0a; border-top: 1px solid #777; }

.excel { flex: 1; display: flex; flex-direction: column; min-width: 0; background: #e6e6e6; }
.top { background: #217346; color: #fff; height: 64px; position: relative; flex: none; }
.circuit { position: absolute; right: 0; top: 0; }
.titlebar { position: relative; height: 32px; display: flex; align-items: center; }
.qat { margin-left: 20px; }
.wb { margin-left: 126px; }
.ctxhead { margin-left: 125px; width: 194px; height: 32px; background: #1b5c38; color: #8fc7a6; display: flex; align-items: center; justify-content: center; }
.user { margin-left: 645px; }
.avatar { margin-left: 11px; width: 24px; height: 24px; border-radius: 50%; background: #d4d4d4; color: #666; display: flex; align-items: center; justify-content: center; margin-bottom: 2px; }
.win { margin-left: 25px; margin-bottom: 2px; }
.tabs { position: relative; display: flex; height: 32px; align-items: center; padding-left: 6.5px; }
.tab { padding: 1px 13.5px 0; height: 32px; display: flex; align-items: center; box-sizing: border-box; flex: none; }
.tab.tabFile { margin-right: 8px; }
.tab.on { background: #f3f3f3; color: #217346; padding: 0 12.500px; margin: 2px .5px 0 0; height: 30px; }
.tab.pp { margin-right: 2px; padding-right: 14.500px; }
.tab.ctx { background: #1b5c38; }
.tab.last { padding-right: 13px; }
.bulb { margin: 0 13px 0 15px; }
.bulb + svg { margin-top: 1px; }
.shareic { margin-left: auto; margin-right: 4px; }
.shareic + svg { margin-right: 24px; margin-top: 1px; }

.ribbon { height: 92px; background: #f3f3f3; border-bottom: 1px solid #d2d2d2; display: flex; flex: none; position: relative; }
.group { display: flex; flex-direction: column; box-sizing: border-box; height: 92px; flex: none; background: linear-gradient(#c8c8c8, #c8c8c8) right 4px / 1px 84px no-repeat; }
.g1 { width: 165px; } .g2 { width: 213px; } .g3 { width: 271px; } .g4 { width: 147px; } .g5 { width: 591px; } .g6 { width: 142px; } .g7 { width: 194px; }
.gc { height: 76px; display: flex; flex: none; margin-top: -1px; }
.gc.col { flex-direction: column; }
.gl { height: 16px; display: flex; align-items: center; padding-right: 3px; }
.gl span { flex: 1; display: flex; justify-content: center; }
.la { margin-left: 5px; }
.off { color: #b1b1b1; }
.off .dn { border-top-color: #b1b1b1; }
.dn { width: 0; height: 0; border: 3px solid transparent; border-top: 3.500px solid #666; border-bottom: 0; flex: none; }
.big { display: flex; flex-direction: column; align-items: center; flex: none; padding-top: 7px; }
.big > svg:first-child { height: 34px; }
.big > .dn { margin-top: 5px; }
.big .ln { display: flex; align-items: center; gap: 3px; margin-top: -1px; }
.paste { margin-left: 13px; width: 32px; }
.stack { margin: 3px 0 0 8px; display: flex; flex-direction: column; }
.stack > div { height: 23.300px; display: flex; align-items: center; gap: 4px; }
.stack > div .dn { margin-left: 6px; }
.stack > div .dn.m1 { margin-left: -2px; }
.stack.ed { margin-left: 12px; width: 83px; }
.r1 { margin-top: 12px; height: 24px; display: flex; align-items: center; padding-left: 8px; flex: none; }
.r2 { margin-top: 6px; height: 24px; display: flex; align-items: center; padding-left: 14px; flex: none; }
.al .r1, .al .r2 { padding-left: 13px; }
.al .r1 { margin-top: 11px; } .al .r2 { margin-top: 7px; }
.m8 { margin-left: 8px; }
.combo { height: 23px; box-sizing: border-box; border: 1px solid #c6c6c6; background: #e6e6e6; display: flex; align-items: center; flex: none; }
.combo .dn { margin-left: auto; margin-right: 5px; }
.f1 { width: 112px; } .f2 { width: 43px; border-left: 0; padding-left: 3px; } .f3 { width: 131px; padding-left: 3px; }
.g4 .r2 { padding-left: 12px; } .g4 .r1 { padding-left: 9px; }
.off .dn.k { border-top-color: #666; margin-left: 0; }
.cf { margin-left: 11px; width: 68px; } .ft { margin-left: 5px; width: 54px; }
.gallery { margin: 7px 0 0 1px; display: flex; height: 62px; }
.cells { width: 426px; box-sizing: border-box; background: #fff; border: 1px solid #c6c6c6; display: grid; grid-template-columns: repeat(4, 100px); gap: 6px; grid-auto-rows: 22px; padding: 5px 3px; }
.sc { display: flex; align-items: center; padding-left: 4px; background: #f5f1f7; color: #aaa; box-sizing: border-box; }
.sc.normal { color: #777; } .sc.bad { background: #e3dee3; color: #999; } .sc.good { background: #e6e0e6; color: #999; } .sc.neutral { background: #eae4ea; color: #aaa; }
.sc.calc { background: #f0ebf1; border: 1px solid #aaa; font-weight: 700; padding-left: 3px; color: #bbb; }
.sc.check { background: #c6c4c6; border: 3px double #8f8f8f; color: #fff; font-weight: 700; padding-left: 1px; }
.sc.expl { font-style: italic; } .sc.foll { color: #c0bcc0; }
.sc.foll .fit { border-bottom: 1px solid #c0bcc0; height: 17px; }
.gs { margin-left: -1px; }
.ci { margin-left: 14px; width: 29px; } .cd { margin-left: 10px; width: 34px; } .cm { margin-left: 7px; width: 38px; }
.so { margin-left: 8px; width: 38px; } .fi { margin-left: 3px; width: 42px; }
.collapse { margin: 82px 0 0 69px; }

.fbar { display: flex; height: 76px; padding: 10px 5px 0 5px; flex: none; box-sizing: border-box; }
.name { width: 102px; height: 26px; box-sizing: border-box; background: #fdfdfd; border: 1px solid #c6c6c6; display: flex; align-items: center; padding: 0 7px 0 6px; color: #444; }
.name .dn { margin-left: auto; border-width: 4px 3.500px 0; }
.dots { margin: 6px 0 0 13px; }
.fx { margin-left: 13px; width: 110px; height: 26px; box-sizing: border-box; background: #fdfdfd; border: 1px solid #c6c6c6; display: flex; align-items: center; padding-left: 12px; }
.formula { margin-left: 3px; flex: 1; height: 66px; box-sizing: border-box; background: #fdfdfd; border: 1px solid #c6c6c6; display: flex; justify-content: flex-end; padding: 8px 4px 0; }

.work { display: flex; flex: 1; min-height: 0; }
.recovery { width: 271px; display: flex; flex-direction: column; flex: none; }
.h { margin: 21px 0 0 14px; color: #1c6b41; font-weight: 400; }
.p1 { margin: 16px 0 0 18px; } .p2 { margin-left: 18px; margin-top: -1px; }
.files { margin: 28px 0 0 25px; }
.file { display: flex; gap: 14px; height: 62px; color: #666; align-items: flex-start; }
.file > svg { margin-top: 7px; }
.file > div { display: flex; flex-direction: column; gap: 1px; }
.file .n { color: #262626; }
.help { margin: auto 0 1px 14px; display: flex; align-items: center; gap: 8px; color: #185c37; }
.lk { border-bottom: 1px solid #185c37; height: 16px; }
.close { align-self: flex-end; margin: 0 13px 14px 0; width: 47px; height: 25px; box-sizing: border-box; background: #fdfdfd; border: 1px solid #ababab; display: flex; align-items: center; justify-content: center; color: #444; }

.sheet { flex: 1; display: flex; flex-direction: column; min-width: 0; margin-top: 10px; border-left: 1px solid #b5b5b5; }
.sheetTop { display: flex; height: 786px; flex: none; }
.gridcol { width: 1517px; overflow: hidden; }
.cols { display: flex; height: 16px; border-bottom: 1px solid #9b9b9b; }
.corner { width: 25px; flex: none; border-right: 1px solid #b5b5b5; display: flex; align-items: flex-end; justify-content: flex-end; padding: 0 2px 2px 0; box-sizing: border-box; }
.colrow { display: flex; overflow: hidden; width: 1491px; padding-left: 1px; }
.ch { flex: none; box-sizing: border-box; border-right: 1px solid #b5b5b5; text-align: center; line-height: 15px; color: #111; padding-left: 1px; }
.body { display: flex; height: 769px; overflow: hidden; }
.rows { width: 26px; box-sizing: border-box; border-right: 2px solid #9b9b9b; flex: none; height: 769px; overflow: hidden; }
.rh { box-sizing: border-box; border-bottom: 1px solid #b5b5b5; display: flex; align-items: flex-end; justify-content: center; line-height: 14px; color: #111; padding-left: 1px; }
.canvas { position: relative; width: 1491px; height: 769px; background: #000; overflow: hidden; flex: none; }
.layer { position: absolute; left: 0; top: 0; }
.impact { font-family: Roboto, "Open Sans", sans-serif; font-weight: 900; stroke-width: 1; }
.big1 { stroke-width: 2.200; }
.chart { font-family: "Lato", "Open Sans", sans-serif; }
.deco { font-family: "Lato", sans-serif; }

.slicer { position: absolute; box-sizing: border-box; background: #fff; border: 1px solid #3f78b9; font-family: "Lato", "Open Sans", sans-serif; color: #111; }
.sh { display: flex; align-items: center; justify-content: space-between; border-bottom: 1px solid #3f78b9; font-weight: 700; padding: 1px 2px 0 0; box-sizing: border-box; margin-bottom: 3px; }
.sb { display: flex; gap: 3px; overflow: hidden; }
.list { display: flex; flex-direction: column; gap: 3px; flex: none; }
.row .list { flex: 1; flex-direction: row; }
.btn { height: 22px; box-sizing: border-box; border: 1px solid #999; border-radius: 3px; flex: none; display: flex; align-items: center; padding: 0 0 1px 7px; background: linear-gradient(#a5bfe6, #c3d8f6); }
.row .btn { flex: 1 1 0; min-width: 0; }
.pale .btn { background: linear-gradient(#e9eaee, #fafafa); border-color: #c9c9c9; }
.pale .btn.sel { background: linear-gradient(#a5bfe6, #c3d8f6); border-color: #999; }
.teal { border-color: #5ba3ae; } .teal .sh { border-color: #5ba3ae; } .teal .btn { background: #5ba3ae; border-color: #5ba3ae; color: #fff; }
.indigo { border-color: #4a66ac; } .indigo .sh { border-color: #4a66ac; } .indigo .btn { background: #4a66ac; border-color: #4a66ac; color: #fff; }
.azure { border-color: #2a7fd6; } .azure .sh { border-color: #2a7fd6; } .azure .btn { background: #2a7fd6; border-color: #2a7fd6; color: #fff; }
.vs { width: 16px; background: #f0f0f0; display: flex; flex-direction: column; flex: none; }
.th { background: #cdcdcd; width: 15px; flex: none; }
.dnv { margin-top: auto; }
.vscroll { margin: 1px 0 0 3px; }

.stabs { height: 27px; border-top: 1px solid #9b9b9b; display: flex; align-items: center; margin-right: 21px; box-sizing: border-box; background: #e6e6e6; }
.nav { margin: 0 37px 0 26px; }
.st { height: 22px; display: flex; align-items: center; justify-content: center; flex: none; margin-right: 5px; box-shadow: -3px 0 0 -2px #999; color: #fff; }
.purple { background: #7030a0; } .yellow { background: #ff0; color: #111; } .dark { background: #0d0d0d; } .blue { background: #2e75b6; } .red { background: #c00000; } .green { background: #00b050; color: #111; } .azureTab { background: #0070c0; }
.current { background: linear-gradient(#fff 10%, #ff9c9c); border: 2px solid #fff; border-bottom: 2px solid #217346; color: #217346; font-weight: 700; height: 26px; box-sizing: border-box; margin: 0 2px 0 -3px; }
.plus { margin-left: 30px; }
.sdots { margin-left: 83px; }
.hs { margin-left: auto; }

.status { height: 22px; background: #f3f3f3; border-top: 1px solid #c6c6c6; display: flex; align-items: center; justify-content: flex-end; padding-right: 14px; flex: none; color: #444; }
.vw { width: 40px; height: 22px; background: #c6c6c6; display: flex; align-items: center; justify-content: center; }
.v2 { margin-left: 13px; } .v3 { margin-left: 25px; } .zm { margin-left: 17px; margin-right: 10px; }
</style>
